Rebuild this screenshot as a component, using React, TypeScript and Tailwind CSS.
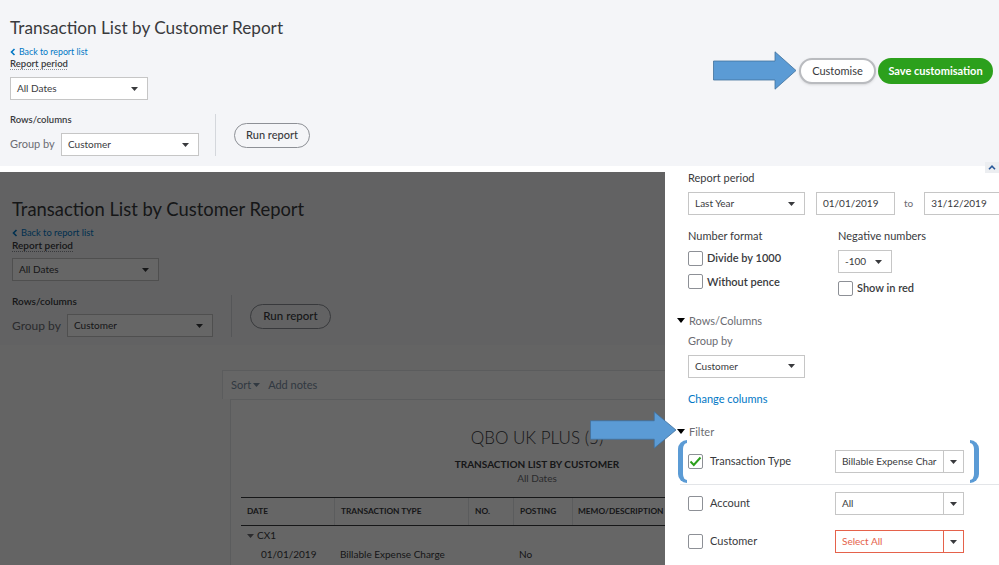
import React from "react";

const Caret = ({ color = "#393a3d" }: { color?: string }) => (
  <svg width="7" height="4" viewBox="0 0 7 4" className="shrink-0">
    <path d="M0 0h7L3.5 4z" fill={color} />
  </svg>
);

const ChevLeft = () => (
  <svg width="6" height="8" viewBox="0 0 6 8" className="shrink-0">
    <path d="M4.5 1 L1.5 4 L4.5 7" fill="none" stroke="#0077c5" strokeWidth="1.6" />
  </svg>
);

type SelProps = {
  text: string;
  className: string;
  textClass?: string;
  split?: boolean;
  border?: string;
};

function Select({
  text,
  className,
  textClass = "text-[10px] text-[#393a3d]",
  split = false,
  border = "border-[#c6c6c6]",
}: SelProps) {
  return (
    <div className={`flex shrink-0 items-center bg-white border ${border} ${className}`}>
      <span className={`flex-1 overflow-hidden whitespace-nowrap pl-[6px] ${textClass}`}>{text}</span>
      {split ? (
        <div className={`flex w-[20px] self-stretch items-center justify-center border-l ${border}`}>
          <Caret />
        </div>
      ) : (
        <div className="pr-[9px]">
          <Caret />
        </div>
      )}
    </div>
  );
}

const Box = ({ checked = false }: { checked?: boolean }) => (
  <div className="flex h-[15px] w-[15px] shrink-0 items-center justify-center rounded-[2px] border border-[#8d9096] bg-white">
    {checked && (
      <svg width="13" height="11" viewBox="0 0 13 11">
        <path d="M1.5 5.5 L4.8 9 L11.5 1.5" fill="none" stroke="#2ca01c" strokeWidth="2" />
      </svg>
    )}
  </div>
);

const Arrow = ({ className }: { className: string }) => (
  <svg viewBox="0 0 84 39" className={className} preserveAspectRatio="none">
    <path d="M0.5 10 H62 V0.8 L83 19.5 L62 38.2 V29 H0.5 Z" fill="#5b9bd5" stroke="#41719c" strokeWidth="0.8" />
  </svg>
);

const Tri = () => (
  <svg width="8" height="5" viewBox="0 0 8 5" className="shrink-0">
    <path d="M0 0h8L4 5z" fill="#000" />
  </svg>
);

export default function App() {
  return (
    <div
      className="relative h-[565px] w-[999px] overflow-hidden bg-white text-[#393a3d]"
      style={{ fontFamily: "Lato, 'Open Sans', sans-serif" }}
    >
      {/* Top screenshot */}
      <div className="flex h-[166px] justify-between bg-[#f4f5f8]">
        <div className="pl-[10px] pt-[17px]">
          <div className="text-[17.2px] leading-[22px] text-[#393a3d]">Transaction List by Customer Report</div>
          <div className="mt-[7px] flex items-center gap-[3px] text-[8.8px] leading-[12px] text-[#0077c5]">
            <ChevLeft />
            <span>Back to report list</span>
          </div>
          <div className="w-fit text-[9.5px] font-semibold leading-[12px] underline decoration-[#8d9096] decoration-dotted underline-offset-2">
            Report period
          </div>
          <Select className="mt-[7px] h-[23px] w-[138px]" text="All Dates" />
          <div className="mt-[14px] flex items-center">
            <div>
              <div className="text-[9.5px] font-semibold leading-[12px]">Rows/columns</div>
              <div className="mt-[7px] flex items-center">
                <span className="w-[51px] text-[11px] text-[#6b6c72]">Group by</span>
                <Select className="h-[23px] w-[138px]" text="Customer" />
              </div>
            </div>
            <div className="ml-[16px] w-px self-stretch bg-[#d4d7dc]" />
            <button className="ml-[18px] h-[25px] w-[76px] rounded-full border border-[#8d9096] bg-[#f4f5f8] text-[11px] font-medium text-[#393a3d]">
              Run report
            </button>
          </div>
        </div>
        <div className="flex items-start gap-[2px] pr-[6px] pt-[51px]">
          <Arrow className="h-[39px] w-[84px]" />
          <div className="mt-[7px] flex items-center gap-[2px]">
            <button className="h-[26px] w-[77px] rounded-full border-2 border-[#b9bbbf] bg-white text-[11px] text-[#393a3d] shadow-sm">
              Customise
            </button>
            <button className="h-[26px] w-[115px] rounded-full bg-[#2ca01c] text-[11px] font-bold text-white">
              Save customisation
            </button>
          </div>
        </div>
      </div>

      {/* Second screenshot */}
      <div className="flex h-[399px]">
        <div className="relative flex w-[665px] shrink-0 flex-col overflow-hidden bg-white pt-[6px]">
          <div className="h-[173px] shrink-0 bg-[#f4f5f8] pl-[12px] pt-[25px]">
            <div className="text-[18.4px] leading-[24px]">Transaction List by Customer Report</div>
            <div className="mt-[6px] flex items-center gap-[3px] text-[9.3px] leading-[12px] text-[#0077c5]">
              <ChevLeft />
              <span>Back to report list</span>
            </div>
            <div className="w-fit text-[10px] font-semibold leading-[12px] underline decoration-[#8d9096] decoration-dotted underline-offset-2">
              Report period
            </div>
            <Select className="mt-[7px] h-[23px] w-[147px]" text="All Dates" />
            <div className="mt-[14px] flex items-center">
              <div>
                <div className="text-[10px] font-semibold leading-[12px]">Rows/columns</div>
                <div className="mt-[7px] flex items-center">
                  <span className="w-[55px] text-[12px] text-[#6b6c72]">Group by</span>
                  <Select className="h-[23px] w-[146px]" text="Customer" />
                </div>
              </div>
              <div className="ml-[18px] w-px self-stretch bg-[#d4d7dc]" />
              <button className="ml-[18px] h-[25px] w-[81px] rounded-full border border-[#8d9096] bg-[#f4f5f8] text-[11.5px] font-medium text-[#393a3d]">
                Run report
              </button>
            </div>
          </div>
          <div className="flex-1 bg-[#fafafa] pl-[222px] pt-[25px]">
            <div className="flex h-[29px] w-[700px] items-center gap-[8px] border-l border-t border-[#e3e5e8] bg-white pl-[8px] text-[11px] text-[#7a8ea3]">
              <span className="flex items-center gap-[2px]">
                Sort <Caret color="#7a8ea3" />
              </span>
              <span>Add notes</span>
            </div>
            <div className="ml-[8px] h-[200px] w-[614px] border border-[#e3e5e8] bg-white pt-[27px]">
              <div className="text-center text-[17px] font-light leading-[22px] text-[#393a3d]">QBO UK PLUS (5)</div>
              <div className="mt-[8px] text-center text-[10px] font-bold leading-[14px]">TRANSACTION LIST BY CUSTOMER</div>
              <div className="text-center text-[10px] leading-[14px] text-[#6b6c72]">All Dates</div>
              <div className="mx-[10px] mt-[12px] border-t border-[#393a3d]">
                <div className="flex h-[28px] border-b border-[#393a3d] text-[8.3px] font-bold">
                  <div className="flex w-[93px] items-center pl-[6px]">DATE</div>
                  <div className="flex w-[134px] items-center border-l border-[#e3e5e8] pl-[6px]">TRANSACTION TYPE</div>
                  <div className="flex w-[45px] items-center border-l border-[#e3e5e8] pl-[6px]">NO.</div>
                  <div className="flex w-[59px] items-center border-l border-[#e3e5e8] pl-[6px]">POSTING</div>
                  <div className="flex w-[84px] items-center border-l border-[#e3e5e8] pl-[5px] whitespace-nowrap">MEMO/DESCRIPTION</div>
                  <div className="flex-1" />
                </div>
                <div className="flex h-[19px] items-center gap-[3px] pl-[6px] text-[10px] text-[#393a3d]">
                  <Caret color="#6b6c72" />
                  <span>CX1</span>
                </div>
                <div className="flex h-[19px] items-center text-[10px] text-[#393a3d]">
                  <div className="w-[93px] pl-[20px]">01/01/2019</div>
                  <div className="w-[134px] pl-[6px]">Billable Expense Charge</div>
                  <div className="w-[45px]" />
                  <div className="w-[59px] pl-[6px]">No</div>
                </div>
              </div>
            </div>
          </div>
          <div className="absolute inset-x-0 bottom-0 top-[6px] bg-black/60" />
        </div>

        {/* Customise panel */}
        <div className="relative flex-1 overflow-hidden bg-white pl-[23px] pt-[5px]">
          <div className="text-[11px] leading-[14px]">Report period</div>
          <div className="mt-[7px] flex items-center">
            <Select className="h-[23px] w-[117px]" text="Last Year" />
            <div className="ml-[11px] flex h-[23px] w-[79px] shrink-0 items-center border border-[#c6c6c6] pl-[6px] text-[10px]">
              01/01/2019
            </div>
            <span className="ml-[9px] shrink-0 text-[10px] text-[#6b6c72]">to</span>
            <div className="ml-[11px] flex h-[23px] w-[79px] shrink-0 items-center border border-[#c6c6c6] pl-[6px] text-[10px]">
              31/12/2019
            </div>
          </div>
          <div className="mt-[14px] flex">
            <div className="w-[150px]">
              <div className="text-[11px] leading-[14px]">Number format</div>
              <div className="mt-[7px] flex items-center gap-[4px]">
                <Box />
                <span className="text-[11px] font-semibold">Divide by 1000</span>
              </div>
              <div className="mt-[7px] flex items-center gap-[4px]">
                <Box />
                <span className="text-[11px] font-semibold">Without pence</span>
              </div>
            </div>
            <div>
              <div className="text-[11px] leading-[14px]">Negative numbers</div>
              <Select className="mt-[7px] h-[23px] w-[54px]" text="-100" />
              <div className="mt-[7px] flex items-center gap-[4px]">
                <Box />
                <span className="text-[11px] font-semibold">Show in red</span>
              </div>
            </div>
          </div>
          <div className="-ml-[11px] mt-[17px] flex items-center gap-[4px] text-[11px] leading-[14px] text-[#6b6c72]">
            <Tri />
            <span>Rows/Columns</span>
          </div>
          <div className="mt-[6px] text-[11px] leading-[14px] text-[#6b6c72]">Group by</div>
          <Select className="mt-[7px] h-[23px] w-[117px]" text="Customer" />
          <div className="mt-[14px] text-[11px] leading-[14px] text-[#0077c5]">Change columns</div>
          <div className="-ml-[11px] mt-[19px] flex items-center gap-[4px] text-[11px] leading-[14px] text-[#6b6c72]">
            <Tri />
            <span>Filter</span>
          </div>
          <div className="-ml-[8px] mt-[4px] border-b border-[#e3e5e8] pb-[3px] pl-[8px]">
            <div className="grid h-[38px] grid-cols-[147px_129px] items-center">
              <div className="flex items-center gap-[7px]">
                <Box checked />
                <span className="text-[11px]">Transaction Type</span>
              </div>
              <Select className="h-[23px] w-[129px]" text="Billable Expense Char" split textClass="text-[10px] text-[#393a3d]" />
            </div>
          </div>
          <div className="grid h-[38px] grid-cols-[147px_129px] items-center">
            <div className="flex items-center gap-[7px]">
              <Box />
              <span className="text-[11px]">Account</span>
            </div>
            <Select className="h-[23px] w-[129px]" text="All" split />
          </div>
          <div className="grid h-[38px] grid-cols-[147px_129px] items-center">
            <div className="flex items-center gap-[7px]">
              <Box />
              <span className="text-[11px]">Customer</span>
            </div>
            <Select
              className="h-[23px] w-[129px]"
              text="Select All"
              split
              border="border-[#e5624b]"
              textClass="text-[10px] text-[#e5624b]"
            />
          </div>
          {/* blue brackets */}
          <div className="absolute left-[13px] top-[274px] h-[43px] w-[9px] rounded-l-[9px] border-y-[3px] border-l-[5px] border-[#5b9bd5]" />
          <div className="absolute left-[305px] top-[274px] h-[43px] w-[9px] rounded-r-[9px] border-y-[3px] border-r-[5px] border-[#5b9bd5]" />
        </div>
      </div>

      {/* collapse caret */}
      <div className="absolute left-[985px] top-[162px] flex h-[11px] w-[14px] items-center justify-center bg-[#eceef1]">
        <svg width="8" height="5" viewBox="0 0 8 5">
          <path d="M1 4.2 L4 1.2 L7 4.2" fill="none" stroke="#2a5a9a" strokeWidth="1.6" />
        </svg>
      </div>

      {/* annotation arrow pointing to Filter */}
      <Arrow className="absolute left-[590px] top-[411px] h-[38px] w-[87px]" />
    </div>
  );
}
